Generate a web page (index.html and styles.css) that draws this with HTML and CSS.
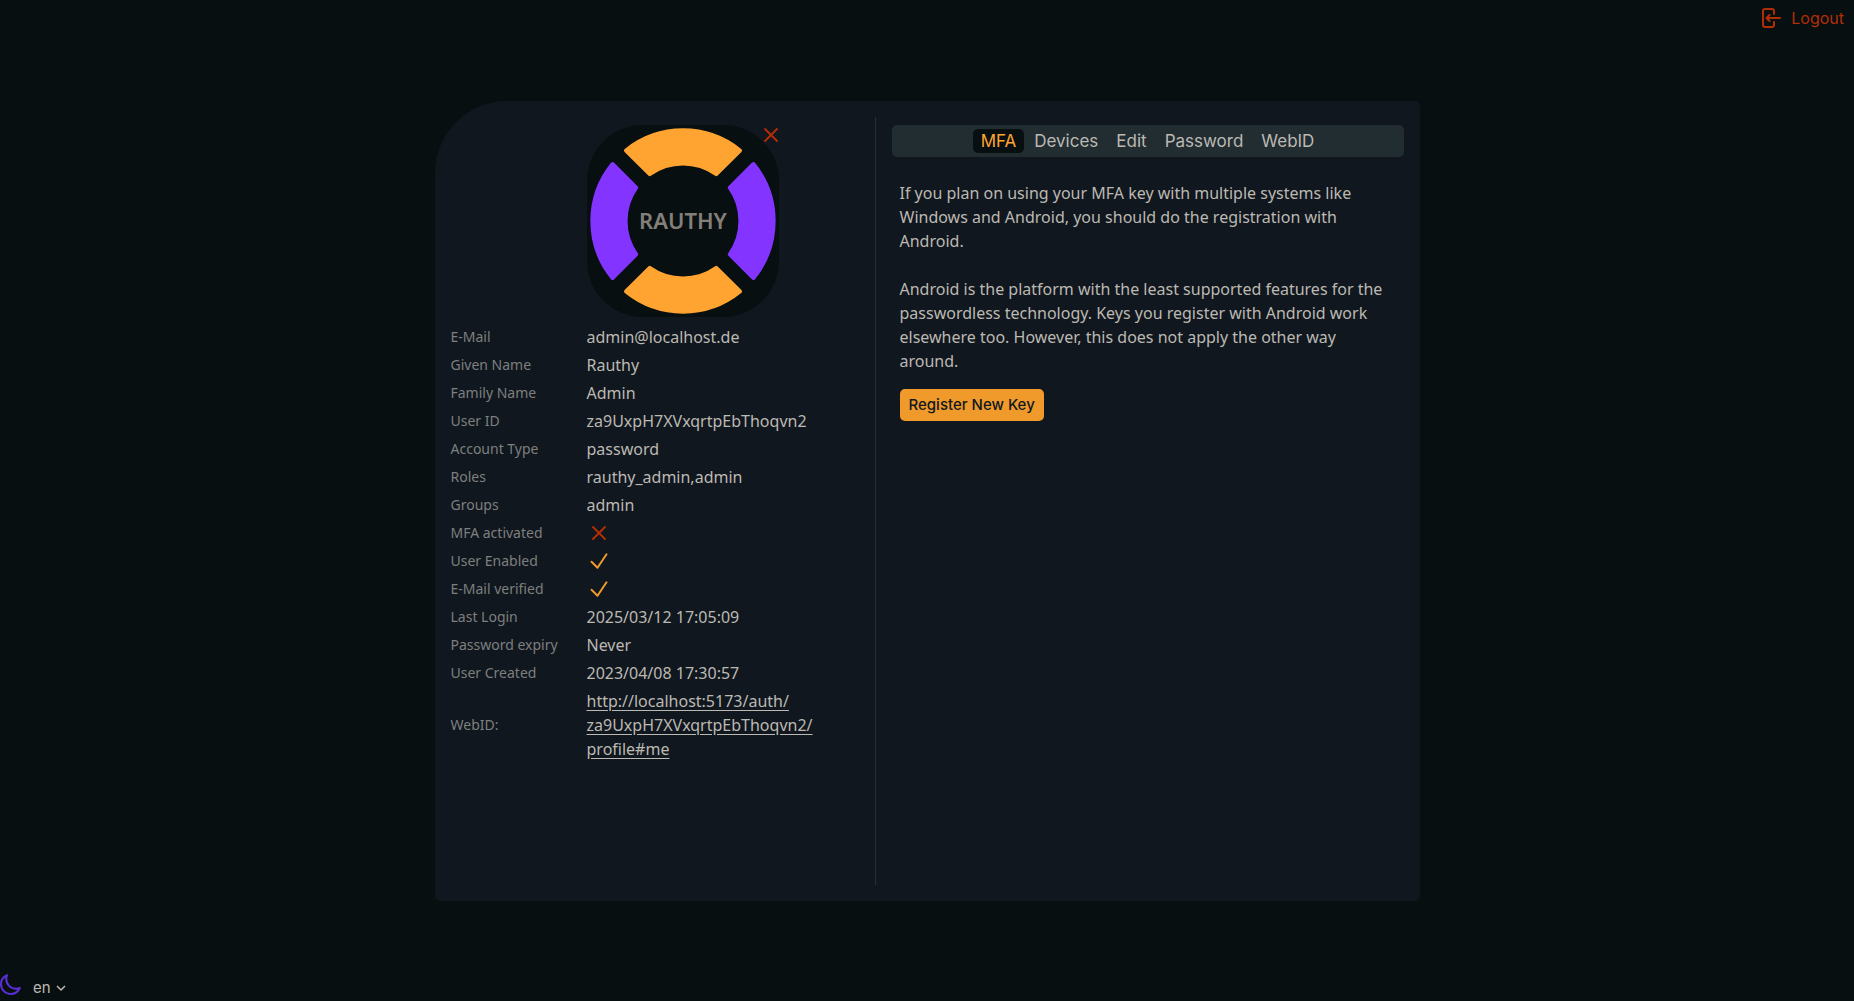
FILE: index.html
```html
<!DOCTYPE html>
<html lang="en">
<head>
<meta charset="utf-8">
<title>Rauthy Account</title>
<link rel="stylesheet" href="styles.css">
</head>
<body>
<header class="top">
  <button class="logout" type="button">
    <svg class="icon" viewBox="0 0 24 24" aria-hidden="true"><path d="M15 8V5a2 2 0 0 0-2-2H6a2 2 0 0 0-2 2v14a2 2 0 0 0 2 2h7a2 2 0 0 0 2-2v-3M21 12H8M10.500 9l-3 3 3 3"/></svg>
    Logout
  </button>
</header>
<main class="card">
  <section class="profile">
    <table class="info">
      <tbody>
        <tr>
          <td></td>
          <td>
            <div class="avatar">
              <svg class="logo" viewBox="-96 -96 192 192" role="img" aria-label="Rauthy">
                <g class="seg-orange">
                  <path d="M-57-70.500A90.700 90.700 0 0 1 57-70.500L33.300-46.800A57.500 57.500 0 0 0-33.300-46.800Z"/>
                  <path d="M-57-70.500A90.700 90.700 0 0 1 57-70.500L33.300-46.800A57.500 57.500 0 0 0-33.300-46.800Z" transform="rotate(180)"/>
                </g>
                <g class="seg-violet">
                  <path d="M-57-70.500A90.700 90.700 0 0 1 57-70.500L33.300-46.800A57.500 57.500 0 0 0-33.300-46.800Z" transform="rotate(90)"/>
                  <path d="M-57-70.500A90.700 90.700 0 0 1 57-70.500L33.300-46.800A57.500 57.500 0 0 0-33.300-46.800Z" transform="rotate(270)"/>
                </g>
                <text class="logo-text" x="0" y="8">RAUTHY</text>
              </svg>
              <button class="remove" type="button" aria-label="Remove picture">
                <svg class="icon cross" viewBox="0 0 24 24" aria-hidden="true"><path d="M6 18 18 6M6 6l12 12"/></svg>
              </button>
            </div>
          </td>
        </tr>
        <tr><th scope="row">E-Mail</th><td>admin@localhost.de</td></tr>
        <tr><th scope="row">Given Name</th><td>Rauthy</td></tr>
        <tr><th scope="row">Family Name</th><td>Admin</td></tr>
        <tr><th scope="row">User ID</th><td>za9UxpH7XVxqrtpEbThoqvn2</td></tr>
        <tr><th scope="row">Account Type</th><td>password</td></tr>
        <tr><th scope="row">Roles</th><td>rauthy_admin,admin</td></tr>
        <tr><th scope="row">Groups</th><td>admin</td></tr>
        <tr><th scope="row">MFA activated</th><td><svg class="icon cross" viewBox="0 0 24 24" role="img" aria-label="No"><path d="M6 18 18 6M6 6l12 12"/></svg></td></tr>
        <tr><th scope="row">User Enabled</th><td><svg class="icon check" viewBox="0 0 24 24" role="img" aria-label="Yes"><path d="M4.500 12.750l6 6 9-13.500"/></svg></td></tr>
        <tr><th scope="row">E-Mail verified</th><td><svg class="icon check" viewBox="0 0 24 24" role="img" aria-label="Yes"><path d="M4.500 12.750l6 6 9-13.500"/></svg></td></tr>
        <tr><th scope="row">Last Login</th><td>2025/03/12 17:05:09</td></tr>
        <tr><th scope="row">Password expiry</th><td>Never</td></tr>
        <tr><th scope="row">User Created</th><td>2023/04/08 17:30:57</td></tr>
        <tr><th scope="row">WebID:</th><td><a class="webid" href="#me">http://localhost:5173/auth/<wbr>za9UxpH7XVxqrtpEbThoqvn2/<wbr>profile#me</a></td></tr>
      </tbody>
    </table>
  </section>
  <section class="settings">
    <div class="tabs" role="tablist">
      <button class="tab active" type="button" role="tab" aria-selected="true">MFA</button>
      <button class="tab" type="button" role="tab" aria-selected="false">Devices</button>
      <button class="tab" type="button" role="tab" aria-selected="false">Edit</button>
      <button class="tab" type="button" role="tab" aria-selected="false">Password</button>
      <button class="tab" type="button" role="tab" aria-selected="false">WebID</button>
    </div>
    <div class="panel" role="tabpanel">
      <p>If you plan on using your MFA key with multiple systems like Windows and Android, you should do the registration with Android.</p>
      <p>Android is the platform with the least supported features for the passwordless technology. Keys you register with Android work elsewhere too. However, this does not apply the other way around.</p>
      <button class="register" type="button">Register New Key</button>
    </div>
  </section>
</main>
<footer class="bottom">
  <button class="theme" type="button" aria-label="Switch theme">
    <svg class="icon moon" viewBox="2 1 22 22" aria-hidden="true"><path d="M21.752 15.002A9.720 9.720 0 0 1 18 15.750c-5.385 0-9.750-4.365-9.750-9.750 0-1.330.266-2.597.748-3.752A9.753 9.753 0 0 0 3 11.250C3 16.635 7.365 21 12.750 21a9.753 9.753 0 0 0 9.002-5.998Z"/></svg>
  </button>
  <label class="lang">
    <select class="lang-select" aria-label="Language"><option>en</option><option>de</option></select>
    <svg class="chevron" viewBox="0 0 12 12" aria-hidden="true"><path d="M2 4l4 4 4-4"/></svg>
  </label>
</footer>
</body>
</html>
```
FILE: styles.css
```css
* { box-sizing: border-box; }

body {
  margin: 0;
  min-height: 100vh;
  display: grid;
  grid-template-rows: 1fr auto 1fr;
  justify-items: center;
  background: #080f11;
  color: #bcb9b3;
  font: 16px/24px "Noto Sans", sans-serif;
}

button, select {
  margin: 0;
  padding: 0;
  border: 0;
  background: none;
  color: inherit;
  font: 400 16px/24px Inter, sans-serif;
  cursor: pointer;
}

.icon {
  display: block;
  width: 24px;
  height: 24px;
  fill: none;
  stroke: currentColor;
  stroke-width: 2;
  stroke-linecap: round;
  stroke-linejoin: round;
}

.top, .bottom {
  width: 100%;
  display: flex;
}

.top {
  justify-content: flex-end;
  align-items: flex-start;
  padding: 6px 10px;
}

.logout {
  display: flex;
  gap: 8px;
  color: #b22d05;
}

.card {
  width: min(985px, 100%);
  min-height: 800px;
  display: grid;
  grid-template-columns: 425px 1fr;
  padding: 16px;
  border-radius: 72px 5px 5px 5px;
  background: #10171e;
}

.profile { border-right: 1px solid #262d33; }

.info {
  margin-top: 6px;
  border-collapse: collapse;
}

.info th, .info td {
  padding: 2px 0;
  text-align: left;
  vertical-align: middle;
}

.info th {
  width: 136px;
  color: #7e7f7e;
  font-size: 14px;
  font-weight: 400;
}

.avatar {
  position: relative;
  width: 192px;
  margin-bottom: 4px;
}

.logo {
  display: block;
  width: 192px;
  height: 192px;
  border-radius: 56px;
  background: #080f11;
}

.seg-orange, .seg-violet { stroke-width: 4; stroke-linejoin: round; }
.seg-orange { fill: #ffa431; stroke: #ffa431; }
.seg-violet { fill: #8434ff; stroke: #8434ff; }

.logo-text {
  fill: #857f79;
  font: 600 22px "Noto Sans", sans-serif;
  text-anchor: middle;
}

.remove {
  position: absolute;
  top: -2px;
  right: -4px;
}

.cross { color: #b22d05; }
.check { color: #f09a2c; }
.webid { color: inherit; text-underline-offset: 3px; }

.settings { padding: 8px 0 0 16px; }

.tabs {
  display: flex;
  justify-content: center;
  gap: 2px;
  padding: 4px;
  border-radius: 5px;
  background: #222d32;
}

.tab {
  padding: 0 8px;
  border-radius: 5px;
  font-size: 17px;
}

.tab.active {
  background: #080f11;
  color: #ffa431;
}

.panel { padding: 24px 8px 0; }
.panel p { margin: 0 0 24px; }
.panel p + p { margin-bottom: 16px; }

.register {
  height: 32px;
  padding: 0 9px;
  border-radius: 5px;
  background: #f09a2c;
  color: #10171e;
  font-size: 15px;
  font-weight: 500;
}

.bottom {
  align-items: flex-end;
  gap: 11px;
}

.theme {
  padding-bottom: 5px;
  color: #5b2fd6;
}

.moon {
  width: 22px;
  height: 22px;
}

.lang {
  display: flex;
  align-items: center;
  gap: 4px;
  padding-bottom: 1px;
}

.lang-select {
  appearance: none;
  font-size: 15px;
}

.chevron {
  width: 12px;
  height: 12px;
  fill: none;
  stroke: currentColor;
  stroke-width: 1.500;
}
```
